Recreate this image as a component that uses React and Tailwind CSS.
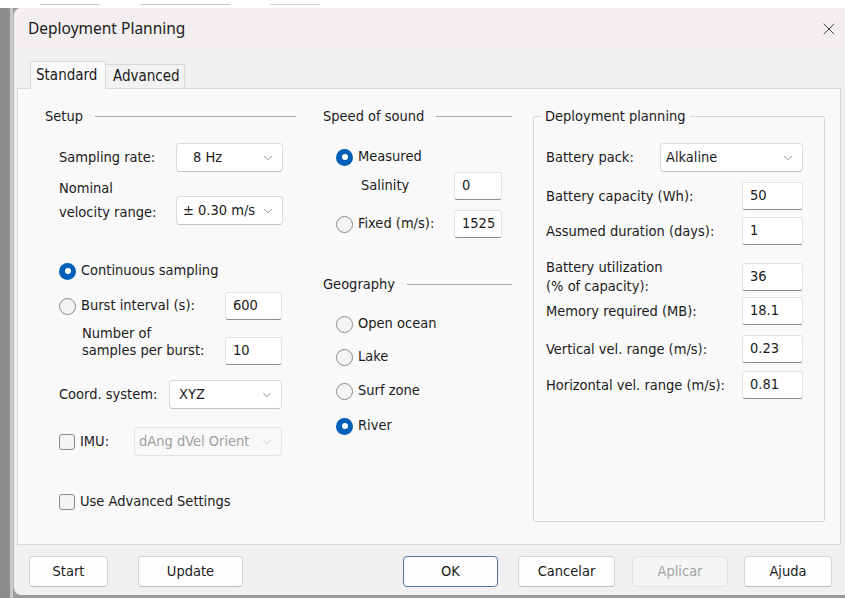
import React from "react";
import { ChevronDown, X } from "lucide-react";

// Tahoma-ish face for the dialog controls, Segoe-ish for chrome
const body = "font-['DejaVu_Sans_Condensed','DejaVu_Sans',sans-serif] text-[14.5px] text-[#1b1b1b]";
const chrome = "font-['Noto_Sans','Open_Sans',sans-serif] text-[#1b1b1b]";

function Radio({ checked, label }) {
  return (
    <div className="flex h-5 items-center gap-[5px]">
      {checked ? (
        <span className="flex h-[17px] w-[17px] items-center justify-center rounded-full bg-[#005fb8]">
          <span className="h-[6px] w-[6px] rounded-full bg-white" />
        </span>
      ) : (
        <span className="h-[17px] w-[17px] rounded-full border border-[#8a8a8a] bg-[#f4f4f4]" />
      )}
      <span>{label}</span>
    </div>
  );
}

function Check({ label }) {
  return (
    <div className="flex h-5 items-center gap-[5px]">
      <span className="h-4 w-4 rounded-[3px] border border-[#8a8a8a] bg-[#f4f4f4]" />
      <span>{label}</span>
    </div>
  );
}

function Combo({ value, className = "", pad = "pl-[6px]", disabled }) {
  return (
    <div
      className={`flex h-[29px] items-center justify-between rounded-[4px] border pr-[7px] ${pad} ${
        disabled
          ? "border-[#e4e4e4] bg-[#f9f9f9] text-[#a0a0a0]"
          : "border-[#dadada] border-b-[#c4c4c4] bg-white"
      } ${className}`}
    >
      <span>{value}</span>
      <ChevronDown size={14} strokeWidth={1.2} className={disabled ? "text-[#c0c0c0]" : "text-[#6a6a6a]"} />
    </div>
  );
}

function Field({ value, className = "" }) {
  return (
    <div
      className={`flex h-[28px] items-center rounded-[3px] border border-[#e3e3e3] border-b-[#8c8c8c] bg-white pl-[7px] ${className}`}
    >
      {value}
    </div>
  );
}

function Heading({ title }) {
  return (
    <div className="flex h-[18px] items-center gap-[12px] leading-[18px]">
      <span>{title}</span>
      <span className="h-px flex-1 bg-[#a5a5a5]" />
    </div>
  );
}

function Btn({ label, className = "", disabled, primary }) {
  return (
    <button
      className={`h-[31px] rounded-[4px] border text-[14.5px] ${
        primary
          ? "border-[#4d78a8] bg-[#fdfdfd]"
          : disabled
          ? "border-[#e2e2e2] bg-[#f5f5f5] text-[#a3a3a3]"
          : "border-[#d3d3d3] border-b-[#bdbdbd] bg-[#fdfdfd]"
      } ${className}`}
    >
      {label}
    </button>
  );
}

function PlanRow({ label, value, className = "" }) {
  return (
    <div className={`flex items-center justify-between ${className}`}>
      <span className="leading-[19px]">{label}</span>
      <Field value={value} className="w-[61px]" />
    </div>
  );
}

export default function App() {
  return (
    <div className="flex h-[598px] w-[845px] flex-col overflow-hidden bg-[#9a9a9a]">
      <div className="flex h-[8px] shrink-0 items-end gap-[40px] bg-white pl-[40px]">
        <span className="mb-[3px] h-px w-[60px] bg-[#c8c8c8]" />
        <span className="mb-[3px] h-px w-[90px] bg-[#c8c8c8]" />
        <span className="mb-[3px] h-px w-[50px] bg-[#d4d4d4]" />
      </div>
      <div className="flex min-h-0 flex-1">
        <div className="flex w-[13px] shrink-0 bg-[#c9c9c9]">
          <div className="w-[10px] bg-[#8d8d8d]" />
        </div>
        <div className={`flex h-[587px] flex-1 flex-col overflow-hidden rounded-tl-[8px] rounded-bl-[8px] border-l border-[#b5b5b5] bg-[#f0f0f0] ${chrome}`}>
          <div className="flex h-[42px] shrink-0 items-center justify-between bg-[#f3eeef] pl-[14px] pr-[6px]">
            <span className="text-[15.5px]">Deployment Planning</span>
            <X size={20} strokeWidth={1.1} className="text-[#333]" />
          </div>

          <div className={`flex flex-1 flex-col pl-[3px] pr-[4px] pt-[11px] ${body}`}>
            <div className="flex h-[27px] items-end pl-[13px] text-[15px]">
              <div className="relative z-10 -mb-px flex h-[28px] w-[76px] items-center rounded-t-[2px] border border-b-0 border-[#d8d8d8] bg-[#f9f9f9] pl-[5px]">
                Standard
              </div>
              <div className="flex h-[24px] w-[79px] items-center border border-b-0 border-l-0 border-[#d8d8d8] bg-[#f2f2f2] pl-[7px]">
                Advanced
              </div>
            </div>

            <div className="flex h-[457px] border border-[#d8d8d8] bg-[#f9f9f9] pl-[27px] pt-[18px]">
              {/* Setup */}
              <div className="flex w-[251px] flex-col">
                <Heading title="Setup" />
                <div className="ml-[14px] mr-[13px] mt-[18px] flex items-center justify-between">
                  <span>Sampling rate:</span>
                  <Combo value="8 Hz" pad="pl-[16px]" className="w-[107px]" />
                </div>
                <div className="ml-[14px] mr-[13px] mt-[4px] flex items-end justify-between">
                  <span className="leading-[24px]">
                    Nominal
                    <br />
                    velocity range:
                  </span>
                  <Combo value="± 0.30 m/s" className="mb-[-1px] h-[28px] w-[107px]" />
                </div>
                <div className="ml-[14px] mt-[37px]">
                  <Radio checked label="Continuous sampling" />
                </div>
                <div className="ml-[14px] mr-[14px] mt-[11px] flex items-center justify-between">
                  <Radio label="Burst interval (s):" />
                  <Field value="600" className="w-[57px]" />
                </div>
                <div className="ml-[14px] mr-[14px] mt-[5px] flex items-end justify-between">
                  <span className="mb-[6px] pl-[23px] leading-[17px]">
                    Number of
                    <br />
                    samples per burst:
                  </span>
                  <Field value="10" className="w-[57px]" />
                </div>
                <div className="ml-[14px] mr-[14px] mt-[15px] flex items-center justify-between">
                  <span>Coord. system:</span>
                  <Combo value="XYZ" pad="pl-[9px]" className="h-[28px] w-[113px]" />
                </div>
                <div className="ml-[14px] mr-[14px] mt-[18px] flex items-center justify-between">
                  <Check label="IMU:" />
                  <Combo value="dAng dVel Orient" pad="pl-[4px]" disabled className="w-[148px]" />
                </div>
                <div className="ml-[14px] mt-[36px]">
                  <Check label="Use Advanced Settings" />
                </div>
              </div>

              {/* Speed of sound + Geography */}
              <div className="ml-[27px] flex w-[189px] flex-col">
                <Heading title="Speed of sound" />
                <div className="ml-[13px] mt-[22px]">
                  <Radio checked label="Measured" />
                </div>
                <div className="mr-[10px] mt-[5px] flex items-center justify-between">
                  <span className="pl-[38px]">Salinity</span>
                  <Field value="0" className="h-[27px] w-[48px] pl-[6px]" />
                </div>
                <div className="ml-[13px] mr-[10px] mt-[10px] flex items-center justify-between">
                  <Radio label="Fixed (m/s):" />
                  <Field value="1525" className="h-[27px] w-[48px] pl-[2px]" />
                </div>
                <div className="mt-[37px]">
                  <Heading title="Geography" />
                </div>
                <div className="ml-[13px] mt-[21px] flex flex-col">
                  <Radio label="Open ocean" />
                  <div className="mt-[13px]">
                    <Radio label="Lake" />
                  </div>
                  <div className="mt-[14px]">
                    <Radio label="Surf zone" />
                  </div>
                  <div className="mt-[15px]">
                    <Radio checked label="River" />
                  </div>
                </div>
              </div>

              {/* Deployment planning */}
              <fieldset className="ml-[21px] h-[415px] w-[292px] rounded-[2px] border border-[#d6d6d6]">
                <legend className="ml-[7px] px-[4px] leading-[18px]">Deployment planning</legend>
                <div className="flex flex-col pl-[12px] pr-[21px]">
                  <div className="mt-[18px] flex items-center justify-between">
                    <span>Battery pack:</span>
                    <Combo value="Alkaline" pad="pl-[5px]" className="w-[143px]" />
                  </div>
                  <PlanRow label="Battery capacity (Wh):" value="50" className="mt-[10px]" />
                  <PlanRow label="Assumed duration (days):" value="1" className="mt-[7px]" />
                  <PlanRow
                    label={
                      <>
                        Battery utilization
                        <br />
                        (% of capacity):
                      </>
                    }
                    value="36"
                    className="mt-[13px]"
                  />
                  <PlanRow label="Memory required (MB):" value="18.1" className="mt-[1px]" />
                  <PlanRow label="Vertical vel. range (m/s):" value="0.23" className="mt-[10px]" />
                  <PlanRow label="Horizontal vel. range (m/s):" value="0.81" className="mt-[8px]" />
                </div>
              </fieldset>
            </div>

            <div className="mt-[11px] flex items-center justify-between pl-[12px] pr-[9px]">
              <div className="flex gap-[30px]">
                <Btn label="Start" className="w-[79px]" />
                <Btn label="Update" className="w-[105px]" />
              </div>
              <div className="flex">
                <Btn label="OK" primary className="w-[95px]" />
                <Btn label="Cancelar" className="ml-[20px] w-[97px]" />
                <Btn label="Aplicar" disabled className="ml-[17px] w-[96px]" />
                <Btn label="Ajuda" className="ml-[16px] w-[88px]" />
              </div>
            </div>
          </div>
        </div>
      </div>
    </div>
  );
}
